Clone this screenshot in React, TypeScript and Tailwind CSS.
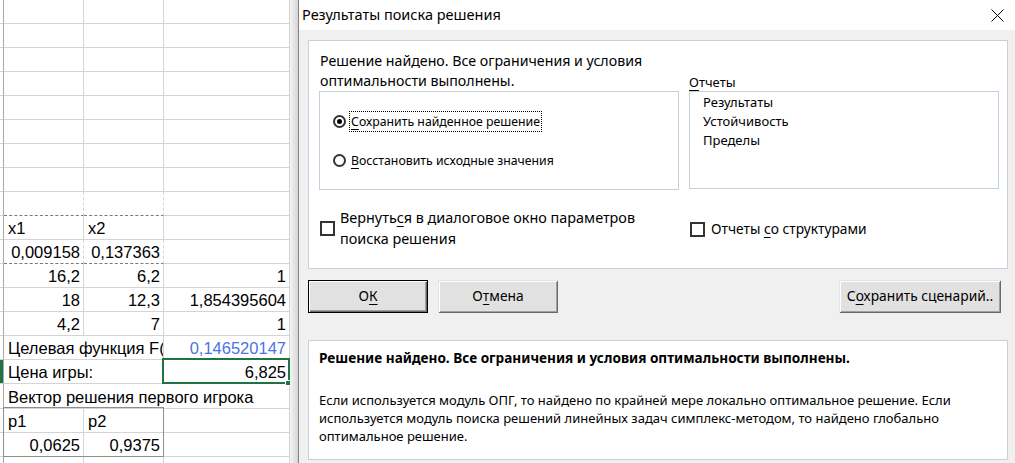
import React from "react";

type CellProps = {
  w: string;
  children?: React.ReactNode;
  right?: boolean;
  dashed?: boolean;
  noBorderR?: boolean;
  className?: string;
};

// one sheet cell, bottom-aligned text like Excel
const Cell: React.FC<CellProps> = ({ w, children, right, dashed, noBorderR, className }) => (
  <div
    className={`${w} h-full flex items-end overflow-hidden whitespace-nowrap pb-[1px] ${
      right ? "justify-end pr-[3px]" : "justify-start pl-[4px]"
    } ${noBorderR ? "" : "border-r border-[#d4d4d4]"} ${
      dashed ? "border-b border-b-[#7a7a7a] border-dashed" : "border-b border-b-[#d4d4d4]"
    } ${className ?? ""}`}
  >
    {children}
  </div>
);

const Gutter: React.FC<{ selected?: boolean }> = ({ selected }) => (
  <div className="w-[4px] h-full border-r border-r-[#a8a8a8] border-b border-b-[#d4d4d4] flex">
    {selected && <div className="w-[3px] h-full bg-[#217346]" />}
  </div>
);

const Row: React.FC<{ h?: string; selected?: boolean; children: React.ReactNode }> = ({ h, selected, children }) => (
  <div className={`flex ${h ?? "h-[24px]"}`}>
    <Gutter selected={selected} />
    {children}
  </div>
);

const Sheet: React.FC = () => {
  const empty = Array.from({ length: 8 });
  return (
    <div className="relative w-[290px] h-full overflow-hidden bg-white text-[16.5px] leading-[19px] text-black font-['Liberation_Sans',Arial,sans-serif]">
      {empty.map((_, i) => (
        <Row key={i}>
          <Cell w="w-[80px]" />
          <Cell w="w-[80px]" />
          <Cell w="w-[126px]" />
        </Row>
      ))}
      <Row>
        <Cell w="w-[80px]" dashed />
        <Cell w="w-[80px]" dashed />
        <Cell w="w-[126px]" />
      </Row>
      <Row>
        <Cell w="w-[80px]">x1</Cell>
        <Cell w="w-[80px]">x2</Cell>
        <Cell w="w-[126px]" />
      </Row>
      <Row>
        <Cell w="w-[80px]" right dashed>0,009158</Cell>
        <Cell w="w-[80px]" right dashed>0,137363</Cell>
        <Cell w="w-[126px]" />
      </Row>
      <Row>
        <Cell w="w-[80px]" right>16,2</Cell>
        <Cell w="w-[80px]" right>6,2</Cell>
        <Cell w="w-[126px]" right>1</Cell>
      </Row>
      <Row>
        <Cell w="w-[80px]" right>18</Cell>
        <Cell w="w-[80px]" right>12,3</Cell>
        <Cell w="w-[126px]" right>1,854395604</Cell>
      </Row>
      <Row>
        <Cell w="w-[80px]" right>4,2</Cell>
        <Cell w="w-[80px]" right>7</Cell>
        <Cell w="w-[126px]" right>1</Cell>
      </Row>
      <Row>
        <Cell w="w-[160px]">Целевая функция F(X)</Cell>
        <Cell w="w-[126px]" right className="text-[#4d72e3]">0,146520147</Cell>
      </Row>
      <Row selected>
        <Cell w="w-[160px]">Цена игры:</Cell>
        <Cell w="w-[126px]" right>6,825</Cell>
      </Row>
      <Row h="h-[25px]">
        <Cell w="w-[286px]">Вектор решения первого игрока</Cell>
      </Row>
      <Row>
        <Cell w="w-[80px]">p1</Cell>
        <Cell w="w-[80px]">p2</Cell>
        <Cell w="w-[126px]" />
      </Row>
      <Row>
        <Cell w="w-[80px]" right>0,0625</Cell>
        <Cell w="w-[80px]" right>0,9375</Cell>
        <Cell w="w-[126px]" />
      </Row>
      <Row>
        <Cell w="w-[80px]" />
        <Cell w="w-[80px]" />
        <Cell w="w-[126px]" />
      </Row>

      {/* border box round p1/p2 */}
      <div className="absolute left-[3px] top-[407px] w-[161px] h-[50px] border border-[#8e8e8e] pointer-events-none" />
      {/* active cell */}
      <div className="absolute left-[162px] top-[358px] w-[128px] h-[26px] border-2 border-[#217346] pointer-events-none" />
      <div className="absolute left-[285px] top-[380px] w-[6px] h-[6px] bg-[#217346] border border-white" />
    </div>
  );
};

const Mn: React.FC<{ children: React.ReactNode }> = ({ children }) => (
  <span className="underline underline-offset-[3px] decoration-1">{children}</span>
);

const Radio: React.FC<{ checked?: boolean }> = ({ checked }) => (
  <span className="w-[13px] h-[13px] rounded-full border-2 border-[#333] bg-white flex items-center justify-center shrink-0">
    {checked && <span className="w-[5px] h-[5px] rounded-full bg-black" />}
  </span>
);

const Check: React.FC = () => <span className="w-[15px] h-[15px] border-2 border-[#333] bg-white shrink-0" />;

const Dialog: React.FC = () => (
  <div className="w-[717px] h-full flex flex-col border-l border-[#808080] bg-[#f0f0f0] text-black font-['Noto_Sans',sans-serif]">
    <div className="h-[30px] shrink-0 bg-white flex items-center justify-between pl-[3px] pr-[11px]">
      <span className="text-[14.5px]">Результаты поиска решения</span>
      <svg width="13" height="13" viewBox="0 0 13 13">
        <path d="M0.5 0.5 L12.5 12.5 M12.5 0.5 L0.5 12.5" stroke="#000" strokeWidth="1" />
      </svg>
    </div>

    <div className="flex flex-col pl-[9px] pr-[7px] pt-[10px]">
      <div className="h-[229px] border border-[#c5d0da] bg-white pl-[10px] pt-[10px]">
        <div className="flex gap-[10px]">
          <div className="w-[360px]">
            <p className="text-[14.2px] leading-[20px] pl-[1px]">
              Решение найдено. Все ограничения и условия
              <br />
              оптимальности выполнены.
            </p>
            <div className="h-[99px] border border-[#c5d0da] pt-[19px] flex flex-col gap-[18px] text-[12.3px]">
              <div className="flex items-center h-[21px] pl-[13px]">
                <Radio checked />
                <span className="ml-[3px] px-[1px] border border-dotted border-black leading-[19px]">
                  <Mn>С</Mn>охранить найденное решение
                </span>
              </div>
              <div className="flex items-center h-[21px] pl-[13px]">
                <Radio />
                <span className="ml-[3px] px-[1px] border border-transparent leading-[19px]">
                  <Mn>В</Mn>осстановить исходные значения
                </span>
              </div>
            </div>
          </div>
          <div className="w-[310px] pt-[22px] text-[13px]">
            <div className="h-[18px] leading-[18px]">
              <Mn>О</Mn>тчеты
            </div>
            <div className="h-[98px] border border-[#c5d0da] pl-[13px] pt-[1px] leading-[19px]">
              <div>Результаты</div>
              <div>Устойчивость</div>
              <div>Пределы</div>
            </div>
          </div>
        </div>

        <div className="flex gap-[10px] mt-[17px]">
          <div className="w-[360px] flex items-center gap-[5px] pl-[1px]">
            <Check />
            <span className="text-[14.4px] leading-[21px]">
              Вернуть<Mn>с</Mn>я в диалоговое окно параметров
              <br />
              поиска решения
            </span>
          </div>
          <div className="w-[310px] flex items-center gap-[6px] pl-[1px] pt-[3px] text-[13.8px]">
            <Check />
            <span>
              Отчеты <Mn>с</Mn>о структурами
            </span>
          </div>
        </div>
      </div>

      <div className="flex h-[33px] mt-[11px] text-[13.8px]">
        <button className="w-[120px] h-full border border-black bg-[#e1e1e1] shadow-[inset_1px_1px_0_#fff,inset_-1px_-1px_0_#696969,inset_-2px_-2px_0_#a0a0a0]">
          О<Mn>К</Mn>
        </button>
        <button className="w-[120px] h-full ml-[10px] bg-[#e1e1e1] shadow-[inset_1px_1px_0_#e3e3e3,inset_-1px_-1px_0_#696969,inset_2px_2px_0_#fff,inset_-2px_-2px_0_#a0a0a0]">
          О<Mn>т</Mn>мена
        </button>
        <button className="w-[162px] h-full ml-auto mr-[7px] bg-[#e1e1e1] shadow-[inset_1px_1px_0_#e3e3e3,inset_-1px_-1px_0_#696969,inset_2px_2px_0_#fff,inset_-2px_-2px_0_#a0a0a0]">
          С<Mn>о</Mn>хранить сценарий..
        </button>
      </div>

      <div className="h-[120px] mt-[27px] border border-[#c5d0da] bg-white pl-[10px] pt-[8px] text-[13px] leading-[18px]">
        <p className="font-bold text-[13.6px]">Решение найдено. Все ограничения и условия оптимальности выполнены.</p>
        <p className="mt-[24px] whitespace-nowrap">
          Если используется модуль ОПГ, то найдено по крайней мере локально оптимальное решение. Если
          <br />
          используется модуль поиска решений линейных задач симплекс-методом, то найдено глобально
          <br />
          оптимальное решение.
        </p>
      </div>
    </div>
  </div>
);

export default function App() {
  return (
    <div className="w-[1015px] h-[463px] flex overflow-hidden bg-white">
      <Sheet />
      <div className="w-[8px] h-full bg-gradient-to-r from-[#f4f4f4] to-[#d6d6d6]" />
      <Dialog />
    </div>
  );
}
